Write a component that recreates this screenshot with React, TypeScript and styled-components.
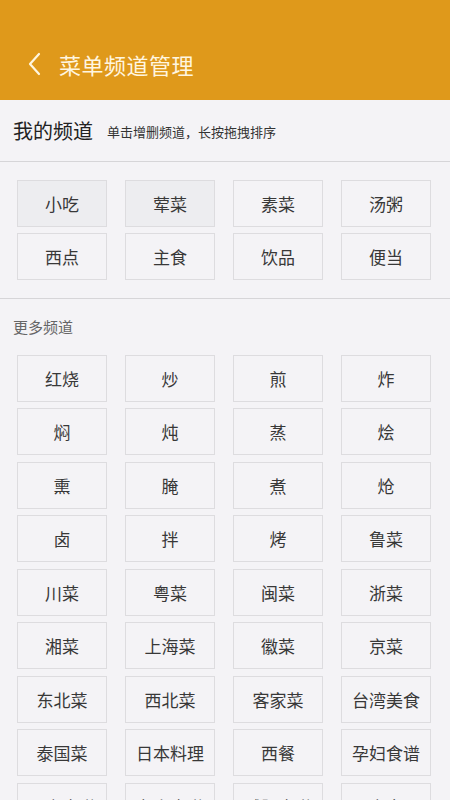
import { createGlobalStyle } from 'styled-components'
import styled from 'styled-components'

const MY_CHANNELS = ['小吃', '荤菜', '素菜', '汤粥', '西点', '主食', '饮品', '便当']
const PINNED = 2

const MORE_CHANNELS = [
  '红烧', '炒', '煎', '炸',
  '焖', '炖', '蒸', '烩',
  '熏', '腌', '煮', '炝',
  '卤', '拌', '烤', '鲁菜',
  '川菜', '粤菜', '闽菜', '浙菜',
  '湘菜', '上海菜', '徽菜', '京菜',
  '东北菜', '西北菜', '客家菜', '台湾美食',
  '泰国菜', '日本料理', '西餐', '孕妇食谱',
  '儿童食谱', '老人食谱', '减肥食谱', '宵夜',
]

const GlobalStyle = createGlobalStyle`
  html, body {
    margin: 0;
    padding: 0;
    background: #f4f3f6;
    font-family: "Noto Sans CJK SC", "Noto Sans", sans-serif;
  }
`

const Page = styled.div`
  width: 450px;
  height: 800px;
  overflow: hidden;
  background: #f4f3f6;
`

const Header = styled.header`
  height: 100px;
  box-sizing: border-box;
  padding: 28px 0 0 27px;
  background: #df991b;
  display: flex;
  align-items: center;
  gap: 16px;
  color: #fff6e0;
`

const Title = styled.h1`
  margin: 0;
  font-size: 22px;
  font-weight: 400;
  letter-spacing: 0.5px;
`

const SectionHead = styled.div`
  height: 62px;
  box-sizing: border-box;
  padding: 0 13px;
  display: flex;
  align-items: center;
  gap: 14px;
  border-bottom: 1px solid #d6d5d8;
`

const HeadTitle = styled.span`
  font-size: 20px;
  color: #222;
`

const HeadHint = styled.span`
  font-size: 13px;
  color: #333;
  padding-top: 2px;
`

const Block = styled.section<{ $divider?: boolean }>`
  padding: 17.5px 17px 17.5px;
  border-bottom: ${({ $divider }) => ($divider ? '1px solid #d6d5d8' : 'none')};
`

const MoreLabel = styled.div`
  padding: 17px 13px 0;
  height: 38.5px;
  box-sizing: border-box;
  font-size: 15px;
  color: #666;
`

const Grid = styled.div`
  display: grid;
  grid-template-columns: repeat(4, 90px);
  column-gap: 18px;
  row-gap: 6.5px;
`

const Cell = styled.div<{ $pinned?: boolean }>`
  height: 47px;
  box-sizing: border-box;
  border: 1.5px solid #dddcdf;
  background: ${({ $pinned }) => ($pinned ? '#ededf0' : '#f4f3f6')};
  display: flex;
  align-items: center;
  justify-content: center;
  font-size: 17px;
  color: #383838;
`

const BackIcon = () => (
  <svg width="16" height="24" viewBox="0 0 16 24" fill="none">
    <path d="M12 2 L3 12 L12 22" stroke="#fff6e0" strokeWidth="2.2" strokeLinecap="round" strokeLinejoin="round" />
  </svg>
)

const App = () => {
  return (
    <Page>
      <GlobalStyle />
      <Header>
        <BackIcon />
        <Title>菜单频道管理</Title>
      </Header>

      <SectionHead>
        <HeadTitle>我的频道</HeadTitle>
        <HeadHint>单击增删频道，长按拖拽排序</HeadHint>
      </SectionHead>

      <Block $divider>
        <Grid>
          {MY_CHANNELS.map((name, i) => (
            <Cell key={name} $pinned={i < PINNED}>{name}</Cell>
          ))}
        </Grid>
      </Block>

      <MoreLabel>更多频道</MoreLabel>
      <Block>
        <Grid>
          {MORE_CHANNELS.map((name) => (
            <Cell key={name}>{name}</Cell>
          ))}
        </Grid>
      </Block>
    </Page>
  )
}

export default App
